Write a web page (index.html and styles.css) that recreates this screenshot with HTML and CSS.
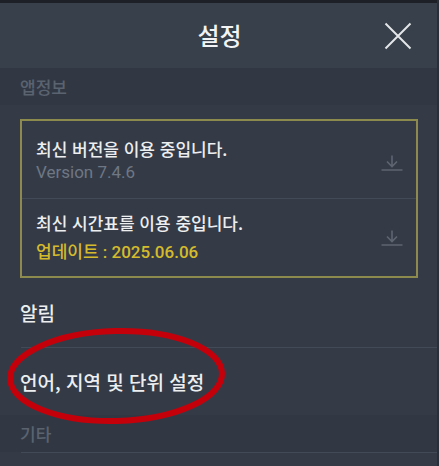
FILE: index.html
```html
<!DOCTYPE html>
<html lang="ko">
<head>
<meta charset="utf-8">
<link rel="stylesheet" href="styles.css">
</head>
<body>
<div class="screen">
  <div class="topline"></div>
  <header class="header">
    <h1 class="title">설정</h1>
    <button class="close" aria-label="닫기">
      <svg width="28" height="28" viewBox="0 0 28 28"><path d="M1.5 1.5 L26.5 26.5 M26.5 1.5 L1.5 26.5" stroke="#e4e6e9" stroke-width="2" fill="none"/></svg>
    </button>
  </header>
  <div class="section-label">앱정보</div>
  <div class="card-wrap">
    <div class="card">
      <div class="card-row row-one">
        <div class="card-text">
          <div class="line-main">최신 버전을 이용 중입니다.</div>
          <div class="line-sub">Version 7.4.6</div>
        </div>
        <svg class="dl" width="22" height="16" viewBox="0 0 22 16"><path d="M11 0.5 V11 M6 6.5 L11 11.5 L16 6.5 M0.5 15 H21.5" stroke="#5e6571" stroke-width="1.6" fill="none"/></svg>
      </div>
      <div class="card-row row-two">
        <div class="card-text">
          <div class="line-main">최신 시간표를 이용 중입니다.</div>
          <div class="line-update">업데이트 : 2025.06.06</div>
        </div>
        <svg class="dl" width="22" height="16" viewBox="0 0 22 16"><path d="M11 0.5 V11 M6 6.5 L11 11.5 L16 6.5 M0.5 15 H21.5" stroke="#5e6571" stroke-width="1.6" fill="none"/></svg>
      </div>
    </div>
  </div>
  <div class="item item-alarm">알림</div>
  <div class="divider"></div>
  <div class="item item-lang">언어, 지역 및 단위 설정</div>
  <div class="section-label section-etc">기타</div>
  <div class="divider"></div>
  <svg class="circle" width="232" height="104" viewBox="0 0 232 104"><ellipse cx="116" cy="52" rx="106" ry="45" stroke="#c4000b" stroke-width="6" fill="none" transform="rotate(-1.5 116 52)"/></svg>
</div>
</body>
</html>
```
FILE: styles.css
```css
* { box-sizing: border-box; }
html, body { margin: 0; padding: 0; }
body {
  width: 439px;
  height: 466px;
  overflow: hidden;
  background: #343b47;
  font-family: "Noto Sans CJK KR", "Noto Sans", sans-serif;
}
.screen {
  position: relative;
  width: 439px;
  height: 466px;
  background: #343b47;
  border-right: 2px solid #2a2f37;
}
.topline {
  height: 3px;
  background: #1d2127;
}
.header {
  height: 65px;
  background: #37404b;
  display: flex;
  align-items: center;
  justify-content: center;
  position: relative;
}
.title {
  margin: 0;
  font-size: 24px;
  font-weight: 500;
  color: #f2f3f5;
  line-height: 1;
  padding-bottom: 2px;
  padding-left: 2px;
}
.close {
  position: absolute;
  right: 25px;
  top: 19px;
  padding: 0;
  border: 0;
  background: none;
  width: 28px;
  height: 28px;
}
.close svg { display: block; }
.section-label {
  height: 37px;
  display: flex;
  align-items: center;
  padding-left: 20px;
  font-size: 17px;
  font-weight: 500;
  color: #5b6370;
  background: #313844;
}
.card-wrap {
  padding: 14px 19px 0 20px;
}
.card {
  border: 2px solid #8d8a4e;
  height: 159px;
}
.card-row {
  display: flex;
  align-items: flex-start;
  justify-content: space-between;
  padding-left: 14px;
  padding-right: 13px;
}
.row-one {
  height: 78px;
  padding-top: 16px;
  border-bottom: 1px solid #424957;
}
.row-two {
  height: 77px;
  padding-top: 12px;
}
.line-main {
  font-size: 17px;
  font-weight: 500;
  line-height: 23px;
  color: #eceef0;
}
.line-sub {
  font-family: Roboto, "Noto Sans CJK KR", sans-serif;
  font-size: 17px;
  line-height: 23px;
  color: #6f7784;
  margin-top: 1px;
}
.line-update {
  font-family: Roboto, "Noto Sans CJK KR", sans-serif;
  font-size: 17px;
  font-weight: 500;
  line-height: 23px;
  color: #d5bb2c;
  margin-top: 7px;
}
.row-one .dl { margin-top: 18px; }
.row-two .dl { margin-top: 19px; }
.dl { display: block; }
.item {
  display: flex;
  align-items: center;
  padding-left: 20px;
  color: #eceef0;
  font-size: 19px;
  font-weight: 500;
}
.item-alarm { height: 69px; }
.item-lang { height: 67px; }
.divider {
  height: 1px;
  margin-left: 21px;
  background: #434a57;
}
.circle {
  position: absolute;
  left: 0;
  top: 324px;
}
```
